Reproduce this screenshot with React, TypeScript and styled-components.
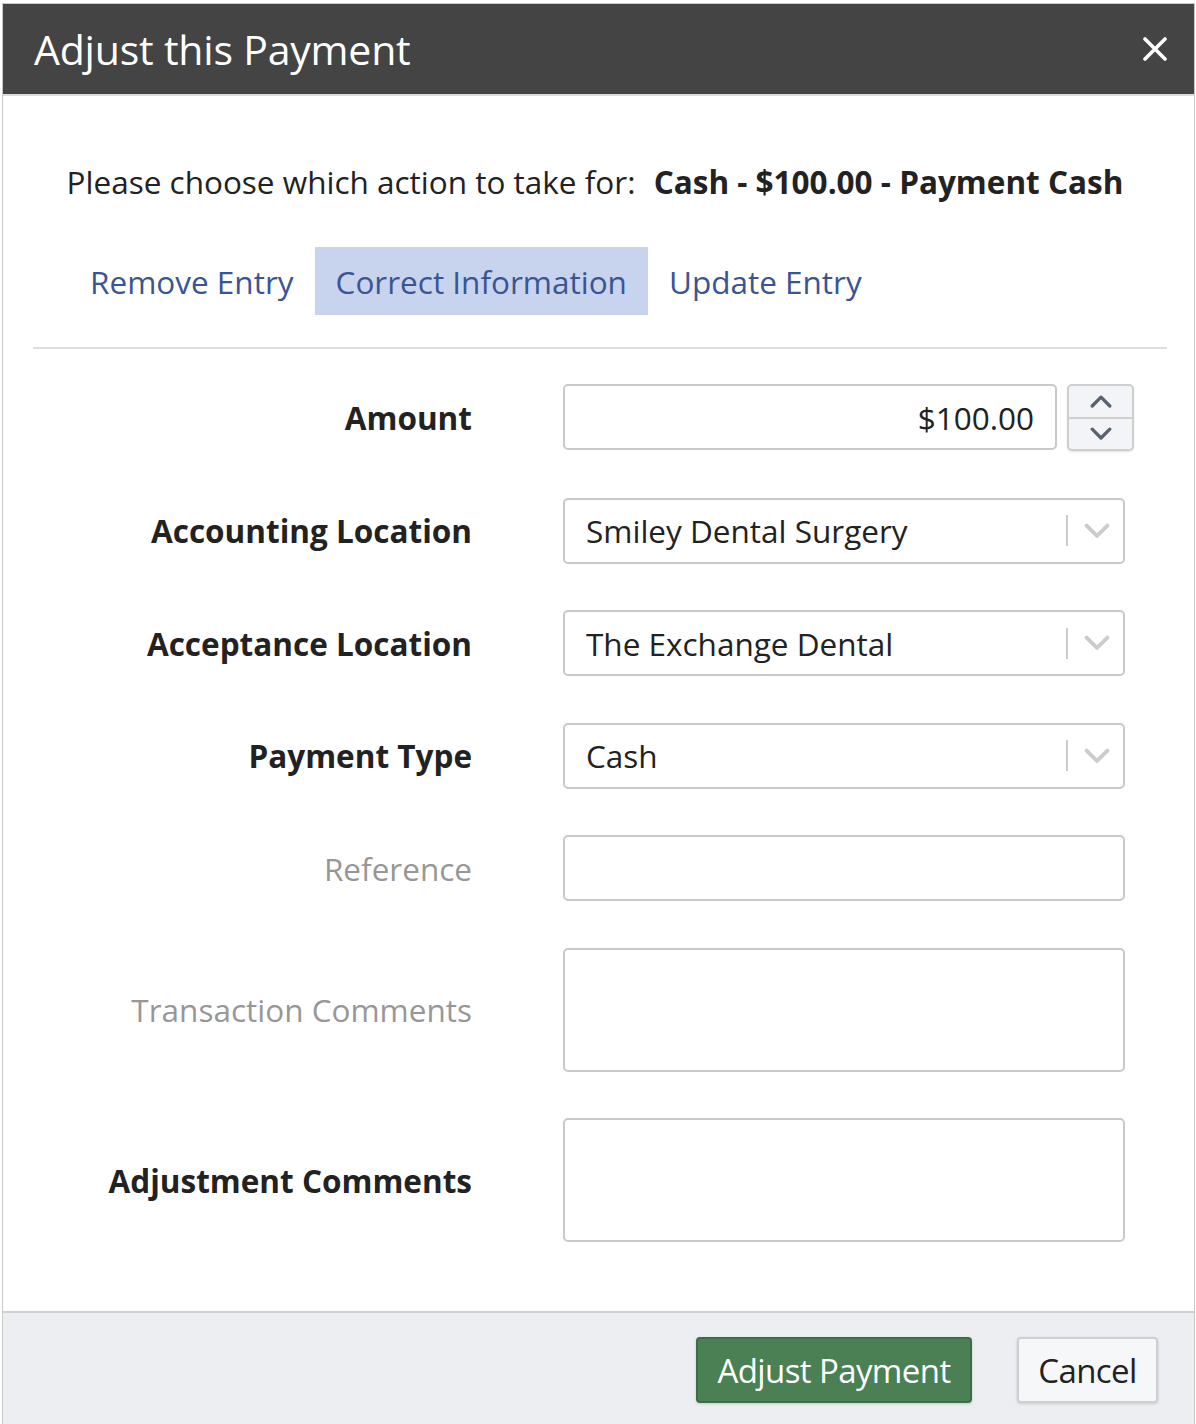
import React from "react";
import styled, { createGlobalStyle } from "styled-components";

const Global = createGlobalStyle`
  html, body { margin: 0; padding: 0; background: #ffffff; }
  body { font-family: "Open Sans", "Noto Sans", sans-serif; }
  * { box-sizing: border-box; }
`;

const Page = styled.div`
  padding: 3px 1px 0 2px;
`;

const Dialog = styled.div`
  border: 1px solid #c9c9c9;
  border-bottom: none;
  background: #fff;
  display: flex;
  flex-direction: column;
  height: 1421px;
`;

const Header = styled.div`
  background: #444444;
  display: flex;
  align-items: center;
  justify-content: space-between;
  padding: 0 26px 0 31px;
  border-bottom: 2px solid #dcdcdc;
  height: 92px;
`;

const Title = styled.h1`
  margin: 0;
  color: #fff;
  font-size: 41px;
  font-weight: 400;
  letter-spacing: -0.2px;
`;

const CloseButton = styled.button`
  background: none;
  border: none;
  padding: 0;
  width: 26px;
  height: 26px;
  display: flex;
  align-items: center;
  justify-content: center;
  cursor: pointer;
`;

const Body = styled.div`
  flex: 1;
  padding: 0 27px 0 30px;
  display: flex;
  flex-direction: column;
`;

const Intro = styled.p`
  margin: 66px 0 0;
  padding-right: 10px;
  text-align: center;
  font-size: 31.5px;
  color: #222;
  line-height: 40px;
`;

const Strong = styled.strong`
  font-weight: 700;
  margin-left: 10px;
`;

const Tabs = styled.div`
  display: flex;
  margin-top: 45px;
  padding-left: 36px;
  padding-bottom: 32px;
  border-bottom: 2px solid #dedede;
`;

const Tab = styled.div<{ $active?: boolean }>`
  height: 68px;
  padding: 0 21px 0 21px;
  display: flex;
  align-items: center;
  font-size: 31.5px;
  color: #3a5594;
  background: ${(p) => (p.$active ? "#c8d4ee" : "transparent")};
`;

const Form = styled.div`
  display: grid;
  grid-template-columns: 439px 1fr;
  column-gap: 91px;
  row-gap: 46.5px;
  margin-top: 35px;
  padding-right: 42px;
`;

const Label = styled.label<{ $muted?: boolean }>`
  text-align: right;
  align-self: center;
  font-size: 31.5px;
  font-weight: ${(p) => (p.$muted ? 400 : 700)};
  color: ${(p) => (p.$muted ? "#979797" : "#222")};
`;

const InputBox = styled.div<{ $tall?: boolean; $align?: string }>`
  height: ${(p) => (p.$tall ? "124px" : "66px")};
  border: 2px solid #c9c9c9;
  border-radius: 5px;
  background: #fff;
  display: flex;
  align-items: center;
  justify-content: ${(p) => (p.$align === "right" ? "flex-end" : "flex-start")};
  padding: 0 21px;
  font-size: 31.5px;
  color: #222;
`;

const AmountRow = styled.div`
  display: flex;
  gap: 10px;
  margin-right: -9px;
`;

const AmountInput = styled(InputBox)`
  flex: 1;
`;

const Spinner = styled.div`
  width: 67px;
  height: 67px;
  border: 2px solid #cfcfcf;
  border-radius: 5px;
  background: #f3f4f7;
  display: flex;
  flex-direction: column;
  box-shadow: 0 1px 2px rgba(0, 0, 0, 0.12);
`;

const SpinHalf = styled.div<{ $top?: boolean }>`
  flex: 1;
  display: flex;
  align-items: center;
  justify-content: center;
  border-bottom: ${(p) => (p.$top ? "2px solid #cfcfcf" : "none")};
`;

const SelectBox = styled(InputBox)`
  justify-content: space-between;
  padding-right: 13px;
`;

const SelectTail = styled.div`
  display: flex;
  align-items: center;
  gap: 16px;
`;

const Divider = styled.span`
  width: 2px;
  height: 31px;
  background: #cccccc;
`;

const Footer = styled.div`
  height: 113px;
  background: #eceef2;
  border-top: 2px solid #d0d0d0;
  display: flex;
  justify-content: flex-end;
  align-items: flex-start;
  gap: 45px;
  padding: 24px 36px 0 0;
`;

const Button = styled.button<{ $primary?: boolean }>`
  height: 66px;
  padding: 0 10px;
  border-radius: 4px;
  font-family: "Open Sans", "Noto Sans", sans-serif;
  font-size: 33px;
  letter-spacing: -0.6px;
  cursor: pointer;
  color: ${(p) => (p.$primary ? "#fff" : "#222")};
  background: ${(p) => (p.$primary ? "#4a8054" : "#f6f7f9")};
  border: 2px solid ${(p) => (p.$primary ? "#3d6c46" : "#cfcfcf")};
  box-shadow: 0 1px 3px rgba(0, 0, 0, 0.15);
  width: ${(p) => (p.$primary ? "276px" : "141px")};
`;

const Chevron = ({ dir, color, size }: { dir: "up" | "down"; color: string; size: number }) => (
  <svg width={size} height={size * 0.6} viewBox="0 0 20 12" fill="none">
    <path
      d={dir === "up" ? "M2 10 L10 2 L18 10" : "M2 2 L10 10 L18 2"}
      stroke={color}
      strokeWidth="3"
      strokeLinecap="round"
      strokeLinejoin="round"
    />
  </svg>
);

const Select = ({ value }: { value: string }) => (
  <SelectBox>
    <span>{value}</span>
    <SelectTail>
      <Divider />
      <Chevron dir="down" color="#cccccc" size={26} />
    </SelectTail>
  </SelectBox>
);

export default function App() {
  return (
    <Page>
      <Global />
      <Dialog>
        <Header>
          <Title>Adjust this Payment</Title>
          <CloseButton aria-label="Close">
            <svg width="24" height="24" viewBox="0 0 24 24">
              <path d="M2 2 L22 22 M22 2 L2 22" stroke="#fff" strokeWidth="3.6" strokeLinecap="round" />
            </svg>
          </CloseButton>
        </Header>
        <Body>
          <Intro>
            Please choose which action to take for: <Strong>Cash - $100.00 - Payment Cash</Strong>
          </Intro>
          <Tabs>
            <Tab>Remove Entry</Tab>
            <Tab $active>Correct Information</Tab>
            <Tab>Update Entry</Tab>
          </Tabs>
          <Form>
            <Label>Amount</Label>
            <AmountRow>
              <AmountInput $align="right">$100.00</AmountInput>
              <Spinner>
                <SpinHalf $top>
                  <Chevron dir="up" color="#5a6270" size={22} />
                </SpinHalf>
                <SpinHalf>
                  <Chevron dir="down" color="#5a6270" size={22} />
                </SpinHalf>
              </Spinner>
            </AmountRow>

            <Label>Accounting Location</Label>
            <Select value="Smiley Dental Surgery" />

            <Label>Acceptance Location</Label>
            <Select value="The Exchange Dental" />

            <Label>Payment Type</Label>
            <Select value="Cash" />

            <Label $muted>Reference</Label>
            <InputBox />

            <Label $muted>Transaction Comments</Label>
            <InputBox $tall />

            <Label>Adjustment Comments</Label>
            <InputBox $tall />
          </Form>
        </Body>
        <Footer>
          <Button $primary>Adjust Payment</Button>
          <Button>Cancel</Button>
        </Footer>
      </Dialog>
    </Page>
  );
}
